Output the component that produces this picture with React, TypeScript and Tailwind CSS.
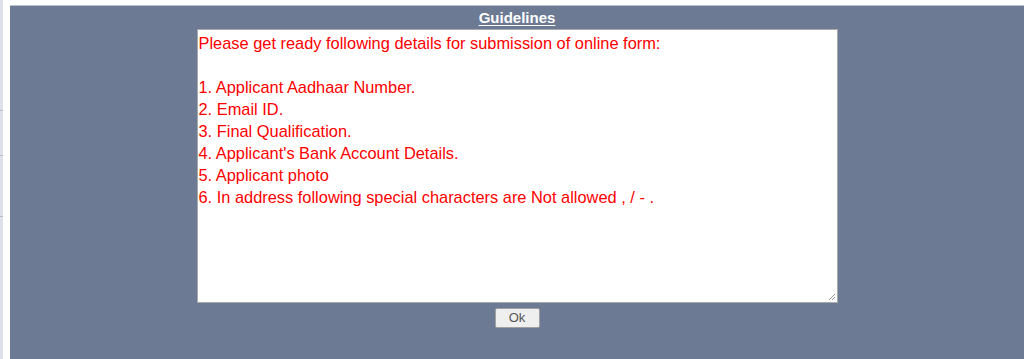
import React from "react"

const items = [
  "1. Applicant Aadhaar Number.",
  "2. Email ID.",
  "3. Final Qualification.",
  "4. Applicant's Bank Account Details.",
  "5. Applicant photo",
  "6. In address following special characters are Not allowed , / - .",
]

export default function App() {
  return (
    <div className="flex h-[359px] w-[1024px] overflow-hidden bg-white font-['Liberation_Sans',Arial,sans-serif]">
      {/* left edge strip */}
      <div className="flex w-[3px] flex-col bg-[#dde1e8]">
        <div className="h-[110px]" />
        <div className="h-px bg-[#b8bec9]" />
        <div className="h-[44px]" />
        <div className="h-px bg-[#b8bec9]" />
        <div className="h-[60px]" />
        <div className="h-px bg-[#b8bec9]" />
      </div>
      <div className="w-[7px]" />

      <div className="flex flex-1 flex-col pt-[5px]">
        <div className="flex flex-1 flex-col items-center border-t border-[#b9c0cc] bg-[#6d7a93]">
          <h2 className="mt-[1px] h-[22px] text-[15px] font-bold leading-[21px] text-white underline underline-offset-2">
            Guidelines
          </h2>
          <div className="relative h-[274px] w-[641px] border border-[#a9a9a9] bg-white px-[1px] pt-[2px] text-[16.4px] leading-[22px] text-[#ff0000]">
            <p>Please get ready following details for submission of online form:</p>
            <p>&nbsp;</p>
            {items.map((t) => (
              <p key={t}>{t}</p>
            ))}
            <svg className="absolute bottom-[1px] right-[1px]" width="8" height="8" viewBox="0 0 8 8">
              <path d="M7 1 L1 7 M7 4 L4 7" stroke="#9a9a9a" strokeWidth="1" />
            </svg>
          </div>
          <button className="mt-[5px] h-[20px] w-[45px] rounded-[2px] border border-[#a0a0a0] bg-[#efefef] text-[13px] leading-[18px] text-[#555]">
            Ok
          </button>
        </div>
      </div>
    </div>
  )
}
